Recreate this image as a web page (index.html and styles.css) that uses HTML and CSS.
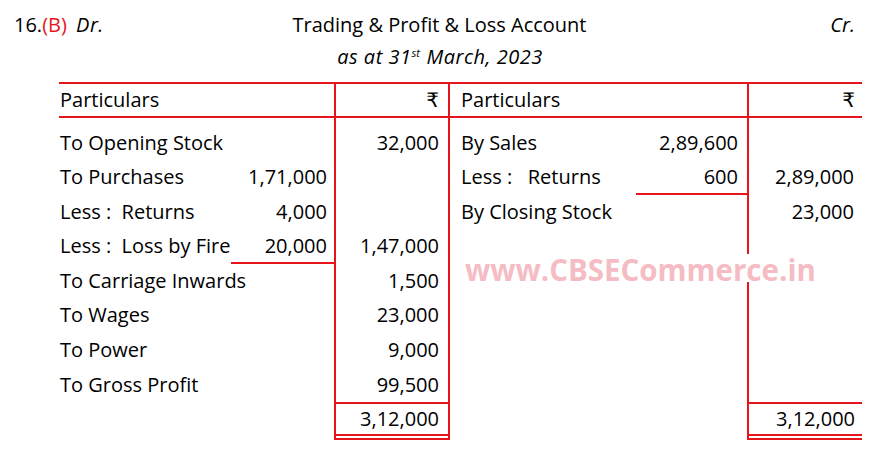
FILE: index.html
```html
<!DOCTYPE html>
<html lang="en">
<head>
<meta charset="utf-8">
<title>Trading &amp; Profit &amp; Loss Account</title>
<link rel="stylesheet" href="styles.css">
</head>
<body>
<div class="page">
  <div class="title-row">
    <div class="qno">16.<span class="red">(B)</span> <em class="dr">Dr.</em></div>
    <div class="title">Trading &amp; Profit &amp; Loss Account</div>
    <div class="cr"><em>Cr.</em></div>
  </div>
  <div class="subtitle"><em>as at 31<sup>st</sup> March, 2023</em></div>

  <div class="ledger">
    <div class="col col-part col-left">
      <div class="hd">Particulars</div>
      <div class="body">
        <div class="row">To Opening Stock</div>
        <div class="row"><span>To Purchases</span><span class="sub">1,71,000</span></div>
        <div class="row"><span class="pre">Less :  Returns</span><span class="sub">4,000</span></div>
        <div class="row"><span class="pre">Less :  Loss by Fire</span><span class="sub under">20,000</span></div>
        <div class="row">To Carriage Inwards</div>
        <div class="row">To Wages</div>
        <div class="row">To Power</div>
        <div class="row">To Gross Profit</div>
      </div>
    </div>
    <div class="col col-amt col-amt-left">
      <div class="hd amt">₹</div>
      <div class="body">
        <div class="row amt">32,000</div>
        <div class="row amt"></div>
        <div class="row amt"></div>
        <div class="row amt">1,47,000</div>
        <div class="row amt">1,500</div>
        <div class="row amt">23,000</div>
        <div class="row amt">9,000</div>
        <div class="row amt">99,500</div>
      </div>
      <div class="total">3,12,000</div>
    </div>
    <div class="col col-part col-right">
      <div class="hd">Particulars</div>
      <div class="body">
        <div class="row"><span>By Sales</span><span class="sub">2,89,600</span></div>
        <div class="row"><span class="pre">Less :   Returns</span><span class="sub under">600</span></div>
        <div class="row">By Closing Stock</div>
      </div>
    </div>
    <div class="col col-amt col-amt-right">
      <div class="hd amt">₹</div>
      <div class="body">
        <div class="row amt"></div>
        <div class="row amt">2,89,000</div>
        <div class="row amt">23,000</div>
      </div>
      <div class="total">3,12,000</div>
    </div>
    <div class="watermark">www.CBSECommerce.in</div>
  </div>
</div>
</body>
</html>
```

FILE: styles.css
```css
* { box-sizing: border-box; }

html, body {
  margin: 0;
  padding: 0;
  background: #ffffff;
}

body {
  font-family: "Open Sans", "DejaVu Sans", sans-serif;
  font-size: 20px;
  color: #000000;
}

.page {
  width: 879px;
  height: 454px;
  padding-top: 9px;
}

.title-row {
  display: grid;
  grid-template-columns: 1fr auto 1fr;
  padding: 0 14px;
  line-height: 32px;
  height: 32px;
}

.qno { text-align: left; }
.red { color: #e8141c; }
.dr { margin-left: 4px; letter-spacing: 0.5px; }
.title { text-align: center; }
.cr { text-align: right; padding-right: 10px; }

.subtitle {
  text-align: center;
  line-height: 32px;
  height: 32px;
  padding-left: 1px;
  letter-spacing: 0.5px;
}

.subtitle sup {
  font-size: 11px;
  line-height: 0;
  vertical-align: 7px;
  margin-right: 1px;
  letter-spacing: 0;
}

.ledger {
  position: relative;
  display: flex;
  margin: 8.5px 0 0 59px;
  width: 803px;
}

.col {
  display: flex;
  flex-direction: column;
}

.col-left { width: 275px; }
.col-amt-left {
  width: 116px;
  border-left: 2px solid #e8141c;
  border-right: 2px solid #e8141c;
}
.col-right { width: 297px; }
.col-amt-right {
  width: 115px;
  border-left: 2px solid #e8141c;
}

.hd {
  height: 36px;
  line-height: 32px;
  border-top: 2px solid #e8141c;
  border-bottom: 2px solid #e8141c;
  white-space: nowrap;
}

.body {
  height: 284.3px;
  padding-top: 8px;
}

.row {
  height: 34.6px;
  line-height: 34.6px;
  display: flex;
  justify-content: space-between;
  white-space: nowrap;
}

.pre { white-space: pre; }

.sub {
  text-align: right;
  height: 34.6px;
}

.col-left .sub { width: 110px; padding-right: 7px; }
.col-right .sub { width: 111px; padding-right: 9px; }

.under { border-bottom: 2px solid #e8141c; }

.col-left .hd, .col-left .row { padding-left: 1px; }
.col-right .hd, .col-right .row { padding-left: 11px; }

.amt {
  justify-content: flex-end;
  text-align: right;
}

.col-amt-left .amt, .col-amt-left .total { padding-right: 9px; }
.col-amt-right .amt, .col-amt-right .total { padding-right: 7px; }
.col-amt-right .row.amt { padding-right: 8px; }

.total {
  height: 38.5px;
  line-height: 30.5px;
  text-align: right;
  border-top: 2px solid #e8141c;
  border-bottom: 6px double #e8141c;
}

.watermark {
  position: absolute;
  left: 404px;
  top: 172px;
  height: 28px;
  line-height: 31.5px;
  padding: 0 2px;
  background: #ffffff;
  color: #f5bcc4;
  font-family: "Open Sans", "DejaVu Sans", sans-serif;
  font-weight: 700;
  font-size: 29.5px;
  white-space: nowrap;
}
```
